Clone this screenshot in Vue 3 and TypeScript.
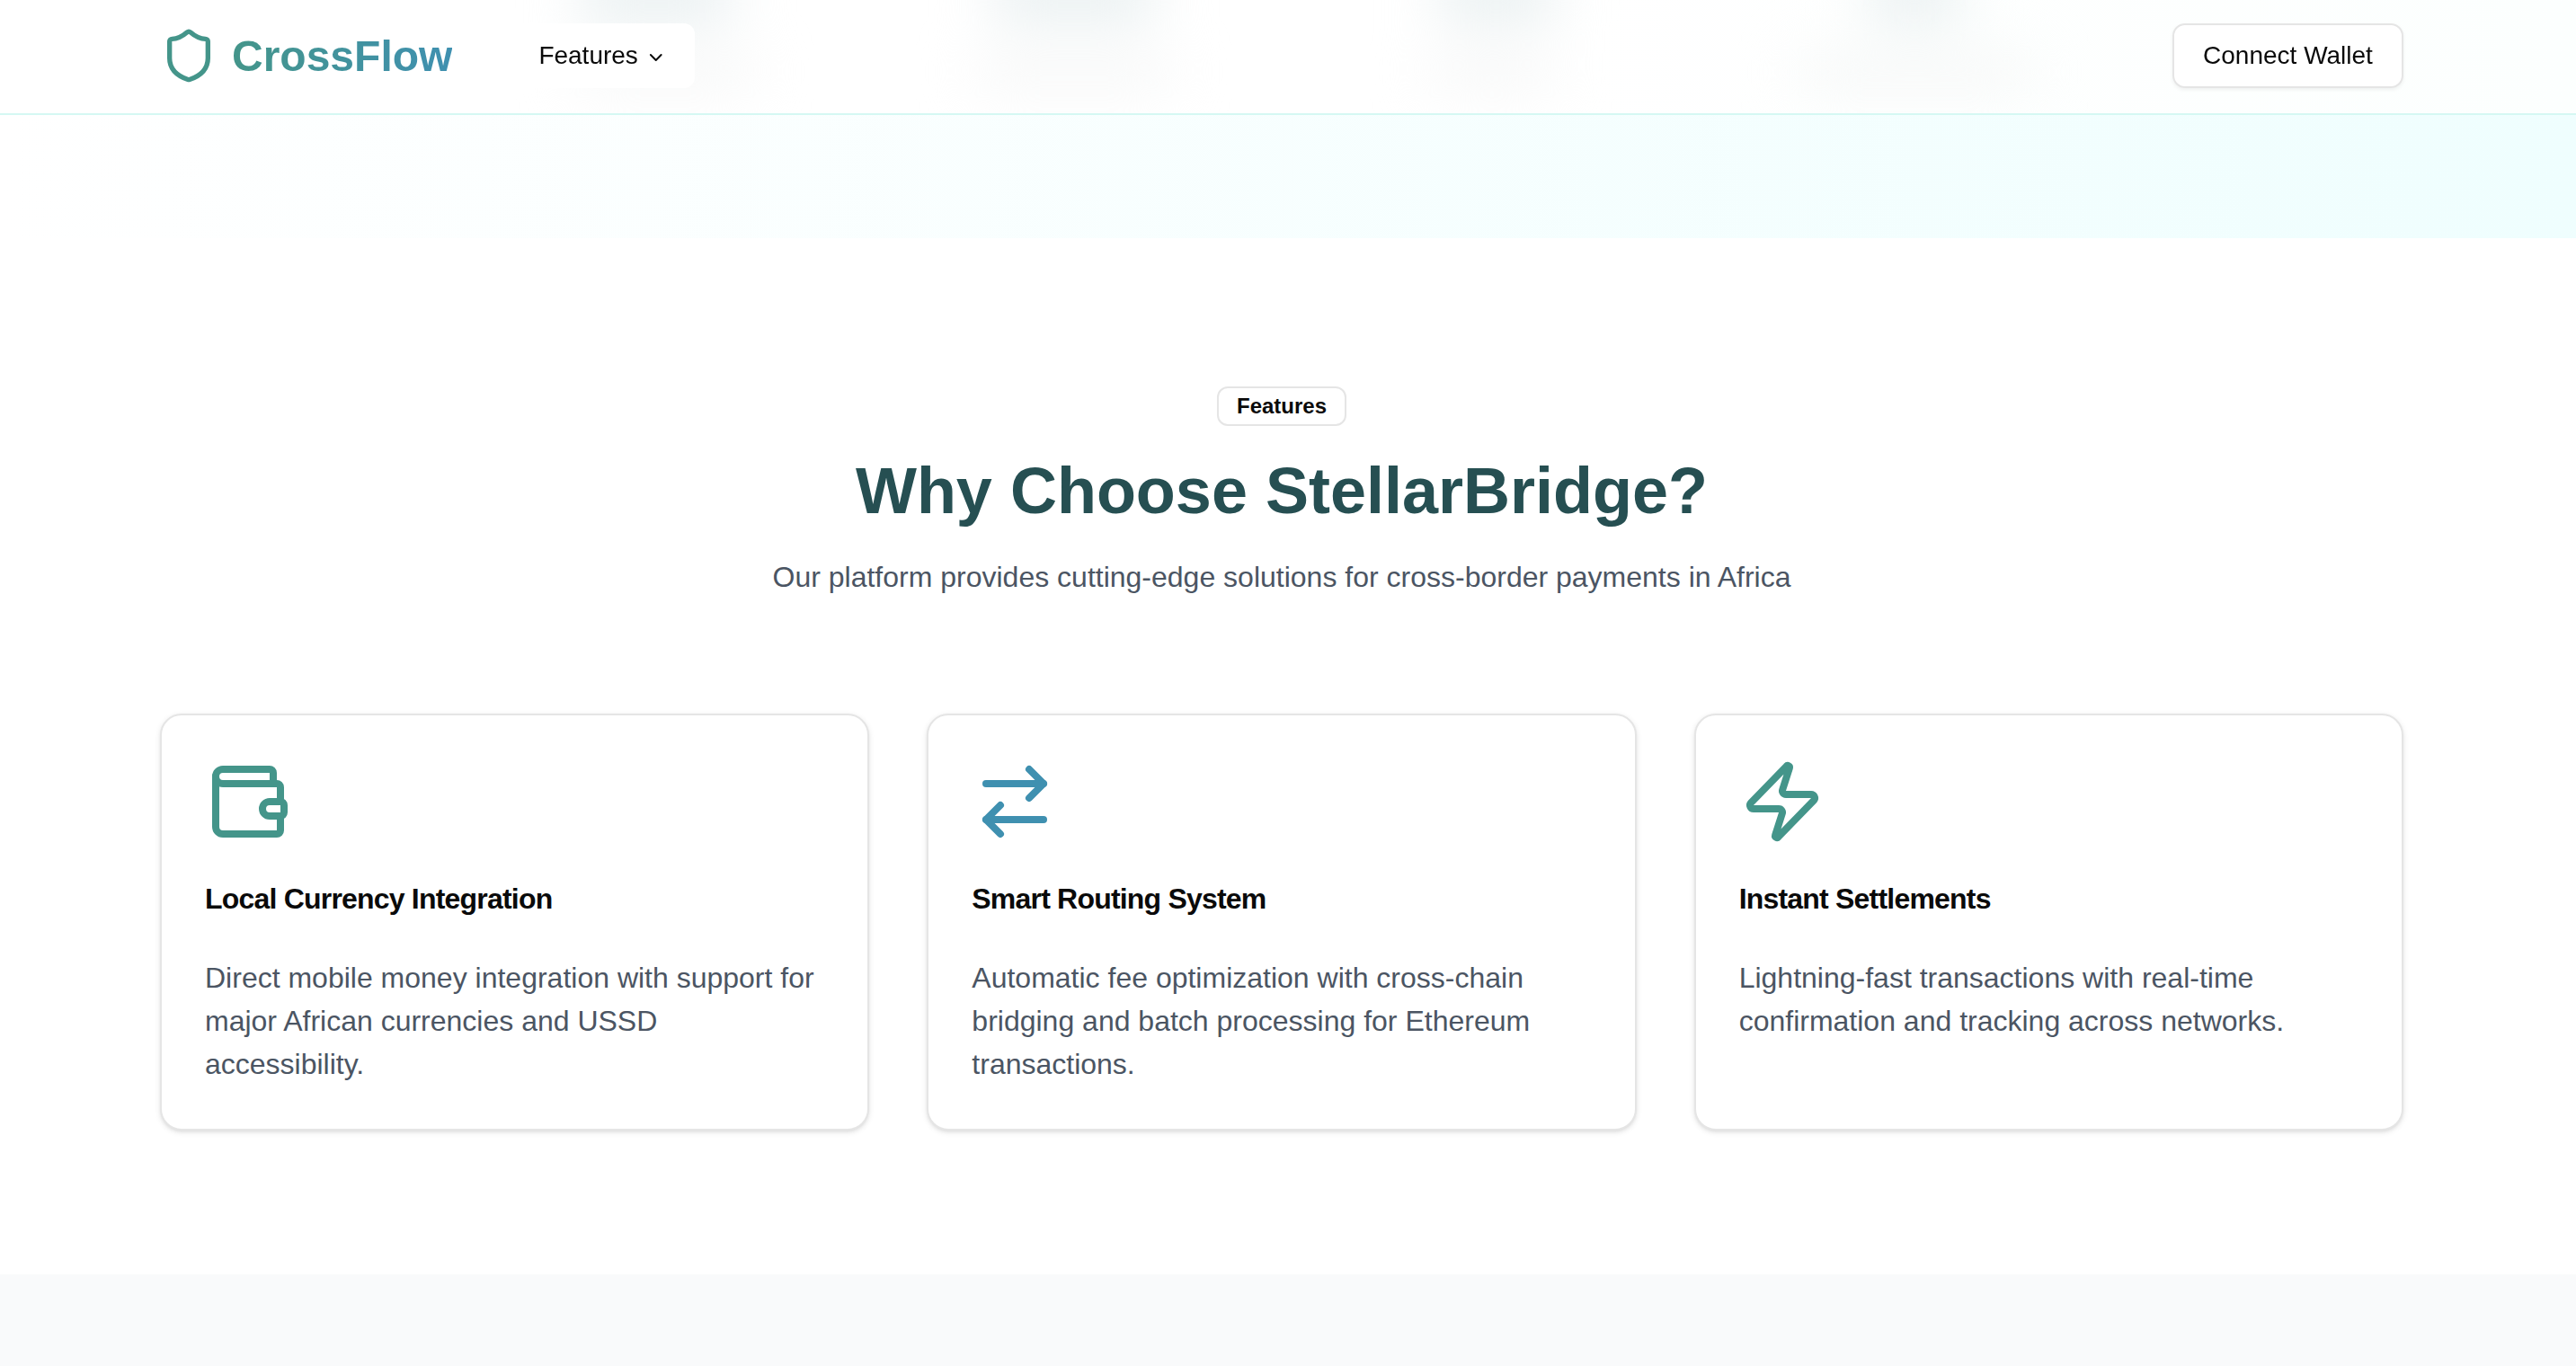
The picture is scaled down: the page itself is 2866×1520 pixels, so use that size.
<script setup lang="ts">
interface Feature {
  title: string;
  text: string;
  tone: string;
  paths: string[];
}

interface Blob {
  left: number;
  top: number;
  width: number;
  height: number;
  tint: string;
}

const features: Feature[] = [
  {
    title: "Local Currency Integration",
    text: "Direct mobile money integration with support for major African currencies and USSD accessibility.",
    tone: "teal",
    paths: [
      "M19 7V4a1 1 0 0 0-1-1H5a2 2 0 0 0 0 4h15a1 1 0 0 1 1 1v4h-3a2 2 0 0 0 0 4h3a1 1 0 0 0 1-1v-2a1 1 0 0 0-1-1",
      "M3 5v14a2 2 0 0 0 2 2h15a1 1 0 0 0 1-1v-4",
    ],
  },
  {
    title: "Smart Routing System",
    text: "Automatic fee optimization with cross-chain bridging and batch processing for Ethereum transactions.",
    tone: "blue",
    paths: ["m16 3 4 4-4 4", "M20 7H4", "m8 21-4-4 4-4", "M4 17h16"],
  },
  {
    title: "Instant Settlements",
    text: "Lightning-fast transactions with real-time confirmation and tracking across networks.",
    tone: "teal",
    paths: [
      "M4 14a1 1 0 0 1-.78-1.63l9.9-10.2a.5.5 0 0 1 .86.46l-1.92 6.02A1 1 0 0 0 13 10h7a1 1 0 0 1 .78 1.63l-9.9 10.2a.5.5 0 0 1-.86-.46l1.92-6.02A1 1 0 0 0 11 14z",
    ],
  },
];

// hero stats showing through the blurred header
const blobs: Blob[] = [
  { left: 645, top: -34, width: 170, height: 56, tint: "#e8eff0" },
  { left: 1105, top: -34, width: 180, height: 56, tint: "#e8eff0" },
  { left: 1600, top: -34, width: 130, height: 56, tint: "#e8eff0" },
  { left: 2080, top: -34, width: 100, height: 56, tint: "#e8eff0" },
  { left: 640, top: 62, width: 200, height: 36, tint: "#f6f7f7" },
  { left: 1085, top: 62, width: 220, height: 36, tint: "#f6f7f7" },
  { left: 1590, top: 62, width: 140, height: 36, tint: "#f6f7f7" },
  { left: 2000, top: 62, width: 260, height: 36, tint: "#f6f7f7" },
];

function blobStyle(b: Blob) {
  return {
    left: `${b.left}px`,
    top: `${b.top}px`,
    width: `${b.width}px`,
    height: `${b.height}px`,
    background: b.tint,
  };
}
</script>

<template>
  <div class="page">
    <header class="topbar">
      <div class="blobs" aria-hidden="true">
        <span v-for="(b, i) in blobs" :key="i" class="blob" :style="blobStyle(b)"></span>
      </div>
      <div class="topbar-inner">
        <div class="left-group">
          <a class="brand" href="#">
            <svg class="brand-icon" viewBox="0 0 24 24" fill="none" stroke="currentColor" stroke-width="2" stroke-linecap="round" stroke-linejoin="round">
              <path d="M20 13c0 5-3.5 7.5-7.66 8.95a1 1 0 0 1-.67-.01C7.5 20.5 4 18 4 13V6a1 1 0 0 1 1-1c2 0 4.5-1.2 6.24-2.72a1.17 1.17 0 0 1 1.52 0C14.51 3.81 17 5 19 5a1 1 0 0 1 1 1z" />
            </svg>
            <span class="brand-name">CrossFlow</span>
          </a>
          <button class="nav-trigger" type="button">
            Features
            <svg class="chevron" viewBox="0 0 24 24" fill="none" stroke="currentColor" stroke-width="2" stroke-linecap="round" stroke-linejoin="round">
              <path d="m6 9 6 6 6-6" />
            </svg>
          </button>
        </div>
        <button class="connect" type="button">Connect Wallet</button>
      </div>
    </header>

    <div class="hero-tail"></div>

    <section class="features">
      <div class="intro">
        <span class="badge">Features</span>
        <h2 class="heading">Why Choose StellarBridge?</h2>
        <p class="sub">Our platform provides cutting-edge solutions for cross-border payments in Africa</p>
      </div>
      <div class="cards">
        <article v-for="f in features" :key="f.title" class="card">
          <svg class="card-icon" :class="f.tone" viewBox="0 0 24 24" fill="none" stroke="currentColor" stroke-width="2" stroke-linecap="round" stroke-linejoin="round">
            <path v-for="d in f.paths" :key="d" :d="d" />
          </svg>
          <h3 class="card-title">{{ f.title }}</h3>
          <p class="card-text">{{ f.text }}</p>
        </article>
      </div>
    </section>

    <div class="next-section"></div>
  </div>
</template>

<style scoped>
.page {
  min-height: 1520px;
  display: flex;
  flex-direction: column;
  font-family: "Liberation Sans", Arial, sans-serif;
  color: #0a0a0a;
  background: #fff;
}

.topbar {
  position: relative;
  height: 128px;
  overflow: hidden;
  border-bottom: 2px solid #d5f8f3;
  box-sizing: border-box;
  background: linear-gradient(to right, #fff 60%, #fcfffe);
}

.blobs {
  position: absolute;
  inset: 0;
  filter: blur(30px);
}

.blob {
  position: absolute;
  border-radius: 8px;
}

.topbar-inner {
  position: relative;
  height: 100%;
  box-sizing: border-box;
  padding-bottom: 2px;
  margin: 0 192px 0 178px;
  display: flex;
  align-items: center;
  justify-content: space-between;
}

.left-group {
  display: flex;
  align-items: center;
  gap: 64px;
}

.brand {
  display: flex;
  align-items: center;
  gap: 16px;
  text-decoration: none;
}

.brand-icon {
  width: 64px;
  height: 64px;
  color: #44958a;
}

.brand-name {
  font-size: 48px;
  font-weight: 700;
  background: linear-gradient(to right, #44958a, #3f90b0);
  -webkit-background-clip: text;
  background-clip: text;
  color: transparent;
}

.nav-trigger {
  height: 72px;
  width: 206px;
  padding: 0 32px;
  display: flex;
  align-items: center;
  gap: 8px;
  border: 0;
  border-radius: 12px;
  background: #fff;
  font: inherit;
  font-size: 28px;
  color: #0a0a0a;
}

.chevron {
  width: 24px;
  height: 24px;
  margin-top: 4px;
}

.connect {
  height: 72px;
  width: 257px;
  padding: 0;
  border: 2px solid #e5e5e5;
  border-radius: 14px;
  background: #fff;
  box-shadow: 0 2px 4px rgba(0, 0, 0, 0.06);
  font: inherit;
  font-size: 28px;
  color: #0a0a0a;
}

.hero-tail {
  height: 137px;
  background: linear-gradient(to right, #fff 0%, #effefe 100%);
}

.features {
  padding: 165px 192px 160px 178px;
}

.intro {
  display: flex;
  flex-direction: column;
  align-items: center;
  text-align: center;
}

.badge {
  box-sizing: border-box;
  height: 44px;
  padding: 0 20px;
  display: flex;
  align-items: center;
  border: 2px solid #e5e5e5;
  border-radius: 12px;
  font-size: 24px;
  font-weight: 700;
}

.heading {
  margin: 32px 0 0;
  font-size: 72px;
  line-height: 80px;
  font-weight: 700;
  color: #264f52;
}

.sub {
  margin: 32px 0 0;
  font-size: 32px;
  line-height: 48px;
  color: #4b5563;
}

.cards {
  margin-top: 128px;
  display: grid;
  grid-template-columns: repeat(3, 1fr);
  gap: 64px;
}

.card {
  padding: 48px;
  border: 2px solid #e5e5e5;
  border-radius: 24px;
  background: #fff;
  box-shadow: 0 2px 6px rgba(0, 0, 0, 0.1), 0 2px 4px -2px rgba(0, 0, 0, 0.1);
}

.card-icon {
  display: block;
  width: 96px;
  height: 96px;
}

.card-icon.teal {
  color: #44958a;
}

.card-icon.blue {
  color: #3f90b0;
}

.card-title {
  margin: 36px 0 0;
  font-size: 32px;
  line-height: 48px;
  font-weight: 700;
  letter-spacing: -0.8px;
}

.card-text {
  margin: 40px 0 0;
  font-size: 32px;
  line-height: 48px;
  color: #4b5563;
}

.next-section {
  flex: 1;
  background: #f9fafb;
}
</style>

<style>
html,
body {
  margin: 0;
  overflow: hidden;
}
</style>
